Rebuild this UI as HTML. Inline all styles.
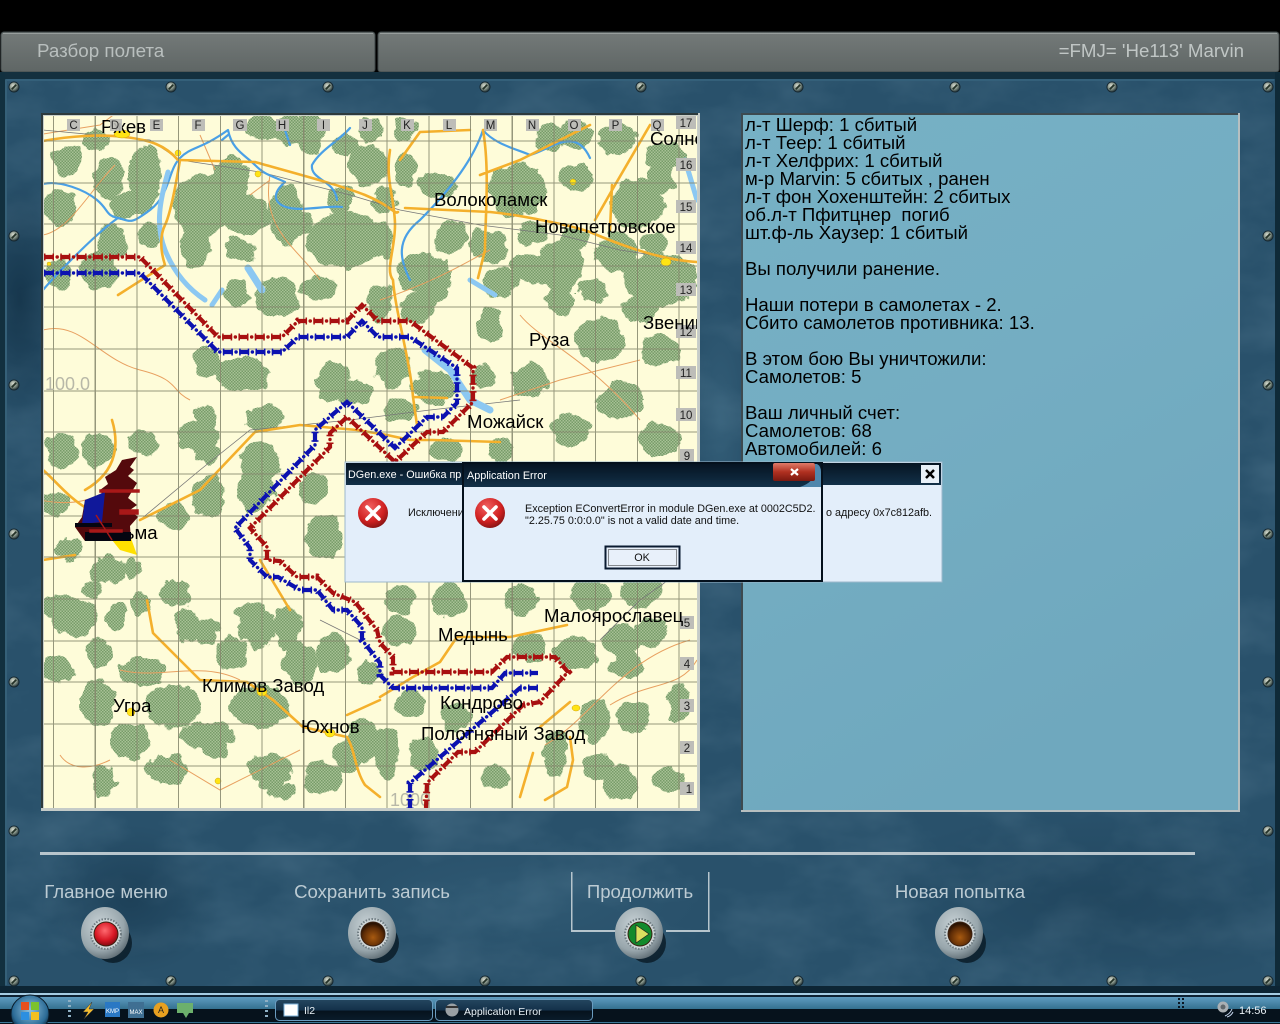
<!DOCTYPE html>
<html lang="ru"><head><meta charset="utf-8"><title>Разбор полета</title>
<style>
html,body{margin:0;padding:0;background:#000;width:1280px;height:1024px;overflow:hidden}
svg{display:block;position:absolute;left:0;top:0}
text{font-family:"Liberation Sans",Arial,sans-serif}
</style></head><body>
<svg xmlns="http://www.w3.org/2000/svg" width="1280" height="1024" viewBox="0 0 1280 1024">
<defs>
<linearGradient id="bar" x1="0" y1="0" x2="0" y2="1"><stop offset="0" stop-color="#747a79"/><stop offset="1" stop-color="#5f6665"/></linearGradient>
<linearGradient id="panel" x1="0" y1="0" x2="0.4" y2="1"><stop offset="0" stop-color="#76b1c5"/><stop offset=".5" stop-color="#74adc2"/><stop offset="1" stop-color="#6fa8be"/></linearGradient>
<radialGradient id="sw1" cx=".5" cy=".5" r=".5"><stop offset="0" stop-color="#0f2d42" stop-opacity=".75"/><stop offset="1" stop-color="#0f2d42" stop-opacity="0"/></radialGradient>
<radialGradient id="sw2" cx=".5" cy=".5" r=".5"><stop offset="0" stop-color="#4f7f98" stop-opacity=".45"/><stop offset="1" stop-color="#4f7f98" stop-opacity="0"/></radialGradient>
<linearGradient id="tb" x1="0" y1="0" x2="0" y2="1"><stop offset="0" stop-color="#5f9cc0"/><stop offset="1" stop-color="#34708f"/></linearGradient>
<linearGradient id="tbb" x1="0" y1="0" x2="0" y2="1"><stop offset="0" stop-color="#24465f"/><stop offset=".5" stop-color="#14314a"/><stop offset=".55" stop-color="#06121d"/><stop offset="1" stop-color="#0a1c2b"/></linearGradient>
<linearGradient id="ttl" x1="0" y1="0" x2="0" y2="1"><stop offset="0" stop-color="#061422"/><stop offset="1" stop-color="#123048"/></linearGradient>
<linearGradient id="cls" x1="0" y1="0" x2="0" y2="1"><stop offset="0" stop-color="#e07a68"/><stop offset=".5" stop-color="#b03020"/><stop offset="1" stop-color="#7a1810"/></linearGradient>
<radialGradient id="err" cx=".4" cy=".3" r=".8"><stop offset="0" stop-color="#f06060"/><stop offset=".6" stop-color="#d02020"/><stop offset="1" stop-color="#701010"/></radialGradient>
<radialGradient id="screw" cx=".4" cy=".35" r=".7"><stop offset="0" stop-color="#d8dcd0"/><stop offset=".6" stop-color="#7c8a80"/><stop offset="1" stop-color="#1c2c30"/></radialGradient>
<radialGradient id="metal" cx=".4" cy=".35" r=".75"><stop offset="0" stop-color="#c8d2d6"/><stop offset=".65" stop-color="#98a6ac"/><stop offset="1" stop-color="#4c5a62"/></radialGradient>
<radialGradient id="redb" cx=".45" cy=".35" r=".7"><stop offset="0" stop-color="#ff6a70"/><stop offset=".6" stop-color="#d81825"/><stop offset="1" stop-color="#7a0810"/></radialGradient>
<radialGradient id="brb" cx=".5" cy=".65" r=".6"><stop offset="0" stop-color="#a85a10"/><stop offset=".7" stop-color="#5e2c06"/><stop offset="1" stop-color="#2a1202"/></radialGradient>
<radialGradient id="orb" cx=".5" cy=".4" r=".6"><stop offset="0" stop-color="#8fc0dc"/><stop offset=".75" stop-color="#2b6b96"/><stop offset="1" stop-color="#0a2436"/></radialGradient>
<pattern id="fo" width="3" height="3" patternUnits="userSpaceOnUse"><rect width="3" height="3" fill="#a8c196"/><rect width="1.500" height="1.500" fill="#769c68"/><rect x="1.500" y="1.500" width="1.500" height="1.500" fill="#769c68"/></pattern>
<filter id="rough" filterUnits="userSpaceOnUse" x="30" y="100" width="680" height="720"><feTurbulence type="fractalNoise" baseFrequency=".07" numOctaves="3" seed="4"/><feDisplacementMap in="SourceGraphic" scale="13" xChannelSelector="R" yChannelSelector="G"/></filter>
<filter id="mott" filterUnits="userSpaceOnUse" x="0" y="72" width="1280" height="920"><feTurbulence type="fractalNoise" baseFrequency=".012 .02" numOctaves="4" seed="8"/><feColorMatrix values="0 0 0 0 .4  0 0 0 0 .6  0 0 0 0 .72  1.600 0 0 0 -.62"/></filter>
<clipPath id="mapc"><rect x="44" y="116" width="653" height="692"/></clipPath>
<clipPath id="tbc"><rect x="0" y="993" width="1280" height="31"/></clipPath>
<mask id="fm" maskUnits="userSpaceOnUse" x="30" y="100" width="680" height="720">
<g fill="#fff" stroke="#fff" stroke-width="9" filter="url(#rough)">
<ellipse cx="95" cy="140" rx="10" ry="6"/><ellipse cx="68" cy="160" rx="10" ry="10"/><ellipse cx="108" cy="178" rx="10" ry="16"/><ellipse cx="145" cy="175" rx="12" ry="25"/><ellipse cx="130" cy="205" rx="18" ry="8"/><ellipse cx="60" cy="208" rx="12" ry="14"/><ellipse cx="112" cy="240" rx="10" ry="14"/><ellipse cx="150" cy="235" rx="8" ry="8"/><ellipse cx="200" cy="205" rx="22" ry="28"/><ellipse cx="230" cy="190" rx="15" ry="30"/><ellipse cx="245" cy="215" rx="20" ry="15"/><ellipse cx="195" cy="245" rx="10" ry="18"/><ellipse cx="240" cy="250" rx="12" ry="8"/><ellipse cx="285" cy="215" rx="12" ry="25"/><ellipse cx="300" cy="225" rx="8" ry="8"/><ellipse cx="345" cy="240" rx="32" ry="24"/><ellipse cx="290" cy="130" rx="15" ry="10"/><ellipse cx="262" cy="128" rx="12" ry="7"/><ellipse cx="310" cy="132" rx="10" ry="18"/><ellipse cx="345" cy="145" rx="10" ry="6"/><ellipse cx="368" cy="165" rx="15" ry="16"/><ellipse cx="372" cy="130" rx="8" ry="8"/><ellipse cx="385" cy="200" rx="8" ry="8"/><ellipse cx="380" cy="240" rx="10" ry="15"/><ellipse cx="340" cy="200" rx="8" ry="10"/><ellipse cx="100" cy="270" rx="14" ry="15"/><ellipse cx="60" cy="275" rx="8" ry="10"/>
<ellipse cx="405" cy="130" rx="8" ry="8"/><ellipse cx="438" cy="185" rx="15" ry="8"/><ellipse cx="517" cy="190" rx="25" ry="22"/><ellipse cx="550" cy="137" rx="10" ry="10"/><ellipse cx="575" cy="135" rx="12" ry="10"/><ellipse cx="617" cy="138" rx="14" ry="12"/><ellipse cx="577" cy="178" rx="12" ry="10"/><ellipse cx="637" cy="203" rx="22" ry="20"/><ellipse cx="667" cy="157" rx="16" ry="10"/><ellipse cx="660" cy="180" rx="10" ry="10"/><ellipse cx="450" cy="238" rx="12" ry="12"/><ellipse cx="493" cy="247" rx="10" ry="13"/><ellipse cx="478" cy="243" rx="5" ry="10"/><ellipse cx="532" cy="233" rx="10" ry="8"/><ellipse cx="573" cy="240" rx="10" ry="7"/><ellipse cx="617" cy="253" rx="16" ry="16"/><ellipse cx="560" cy="267" rx="18" ry="22"/><ellipse cx="530" cy="267" rx="17" ry="10"/><ellipse cx="500" cy="283" rx="13" ry="10"/><ellipse cx="423" cy="273" rx="23" ry="15"/><ellipse cx="440" cy="277" rx="7" ry="13"/><ellipse cx="660" cy="280" rx="33" ry="22"/><ellipse cx="405" cy="170" rx="7" ry="13"/><ellipse cx="593" cy="290" rx="10" ry="8"/><ellipse cx="653" cy="243" rx="10" ry="8"/>
<ellipse cx="207" cy="363" rx="10" ry="10"/><ellipse cx="243" cy="375" rx="23" ry="13"/><ellipse cx="237" cy="293" rx="8" ry="10"/><ellipse cx="277" cy="298" rx="17" ry="15"/><ellipse cx="317" cy="288" rx="13" ry="8"/><ellipse cx="380" cy="302" rx="10" ry="13"/><ellipse cx="417" cy="307" rx="12" ry="10"/><ellipse cx="433" cy="290" rx="10" ry="10"/><ellipse cx="333" cy="383" rx="13" ry="17"/><ellipse cx="392" cy="368" rx="13" ry="15"/><ellipse cx="357" cy="392" rx="10" ry="8"/><ellipse cx="433" cy="387" rx="17" ry="13"/><ellipse cx="490" cy="323" rx="8" ry="13"/><ellipse cx="483" cy="377" rx="7" ry="7"/><ellipse cx="265" cy="418" rx="15" ry="8"/><ellipse cx="205" cy="420" rx="7" ry="12"/><ellipse cx="263" cy="460" rx="13" ry="8"/><ellipse cx="400" cy="410" rx="12" ry="8"/><ellipse cx="447" cy="450" rx="13" ry="7"/><ellipse cx="207" cy="453" rx="5" ry="7"/>
<ellipse cx="62" cy="450" rx="12" ry="12"/><ellipse cx="97" cy="450" rx="12" ry="13"/><ellipse cx="143" cy="443" rx="10" ry="8"/><ellipse cx="197" cy="437" rx="17" ry="10"/><ellipse cx="207" cy="453" rx="8" ry="7"/><ellipse cx="210" cy="497" rx="12" ry="18"/><ellipse cx="260" cy="463" rx="15" ry="17"/><ellipse cx="255" cy="490" rx="13" ry="17"/><ellipse cx="323" cy="537" rx="15" ry="17"/><ellipse cx="313" cy="490" rx="10" ry="12"/><ellipse cx="173" cy="517" rx="12" ry="8"/><ellipse cx="107" cy="570" rx="13" ry="10"/><ellipse cx="70" cy="550" rx="10" ry="5"/><ellipse cx="93" cy="590" rx="5" ry="5"/><ellipse cx="177" cy="593" rx="10" ry="10"/><ellipse cx="65" cy="608" rx="17" ry="10"/><ellipse cx="133" cy="568" rx="5" ry="5"/><ellipse cx="55" cy="503" rx="10" ry="8"/><ellipse cx="247" cy="612" rx="7" ry="5"/><ellipse cx="140" cy="603" rx="6" ry="6"/>
<ellipse cx="73" cy="617" rx="18" ry="15"/><ellipse cx="117" cy="618" rx="5" ry="10"/><ellipse cx="187" cy="625" rx="8" ry="12"/><ellipse cx="207" cy="633" rx="7" ry="10"/><ellipse cx="257" cy="627" rx="13" ry="17"/><ellipse cx="287" cy="627" rx="10" ry="17"/><ellipse cx="232" cy="653" rx="10" ry="12"/><ellipse cx="100" cy="653" rx="8" ry="10"/><ellipse cx="143" cy="672" rx="17" ry="10"/><ellipse cx="97" cy="703" rx="13" ry="17"/><ellipse cx="173" cy="707" rx="23" ry="18"/><ellipse cx="260" cy="707" rx="25" ry="17"/><ellipse cx="300" cy="663" rx="12" ry="17"/><ellipse cx="333" cy="653" rx="13" ry="15"/><ellipse cx="57" cy="670" rx="13" ry="10"/><ellipse cx="130" cy="740" rx="17" ry="13"/><ellipse cx="207" cy="735" rx="23" ry="7"/><ellipse cx="167" cy="770" rx="17" ry="10"/><ellipse cx="270" cy="770" rx="18" ry="12"/><ellipse cx="323" cy="778" rx="15" ry="12"/><ellipse cx="103" cy="782" rx="8" ry="12"/><ellipse cx="362" cy="740" rx="13" ry="17"/><ellipse cx="347" cy="757" rx="8" ry="12"/><ellipse cx="370" cy="672" rx="8" ry="8"/><ellipse cx="217" cy="750" rx="7" ry="5"/><ellipse cx="280" cy="792" rx="10" ry="4"/>
<ellipse cx="400" cy="630" rx="13" ry="10"/><ellipse cx="530" cy="648" rx="13" ry="10"/><ellipse cx="577" cy="653" rx="17" ry="12"/><ellipse cx="623" cy="640" rx="17" ry="12"/><ellipse cx="650" cy="633" rx="13" ry="10"/><ellipse cx="627" cy="667" rx="13" ry="8"/><ellipse cx="410" cy="703" rx="10" ry="10"/><ellipse cx="457" cy="717" rx="12" ry="10"/><ellipse cx="387" cy="753" rx="7" ry="20"/><ellipse cx="423" cy="753" rx="10" ry="13"/><ellipse cx="555" cy="753" rx="8" ry="17"/><ellipse cx="595" cy="720" rx="10" ry="17"/><ellipse cx="633" cy="717" rx="13" ry="10"/><ellipse cx="597" cy="767" rx="10" ry="10"/><ellipse cx="620" cy="783" rx="12" ry="13"/><ellipse cx="670" cy="780" rx="12" ry="8"/><ellipse cx="680" cy="703" rx="8" ry="13"/><ellipse cx="495" cy="777" rx="10" ry="8"/>
<ellipse cx="600" cy="340" rx="20" ry="18"/><ellipse cx="660" cy="350" rx="15" ry="12"/><ellipse cx="560" cy="300" rx="12" ry="10"/><ellipse cx="530" cy="380" rx="14" ry="12"/><ellipse cx="620" cy="400" rx="18" ry="15"/><ellipse cx="570" cy="430" rx="15" ry="12"/><ellipse cx="660" cy="440" rx="15" ry="12"/><ellipse cx="500" cy="450" rx="8" ry="7"/><ellipse cx="640" cy="310" rx="12" ry="10"/><ellipse cx="590" cy="595" rx="15" ry="10"/><ellipse cx="640" cy="590" rx="15" ry="12"/><ellipse cx="520" cy="600" rx="15" ry="10"/><ellipse cx="450" cy="600" rx="14" ry="12"/><ellipse cx="400" cy="600" rx="10" ry="10"/>
</g></mask>
<g id="s"><circle r="5.500" fill="#142630"/><circle r="4.600" fill="url(#screw)"/><path d="M-2.200 2.200 2.200-2.200" stroke="#243228" stroke-width="1.800"/></g>
<g id="btn"><ellipse cx="7" cy="9" rx="19" ry="20" fill="#0a1c28" opacity=".85"/><ellipse cx="-1" cy="-1" rx="24" ry="26" fill="url(#metal)"/><circle cx="0" cy="0" r="15" fill="#cfd6d8" stroke="#6f7c82" stroke-dasharray="1.500 1.500" stroke-width="2"/><circle r="12.500" fill="#3a2010"/></g>
</defs>

<!-- top black -->
<rect width="1280" height="1024" fill="#000"/>
<!-- header -->
<rect x="1" y="32" width="374" height="40" rx="3" fill="url(#bar)" stroke="#40494a"/>
<rect x="378" y="32" width="901" height="40" rx="3" fill="url(#bar)" stroke="#40494a"/>
<rect x="3" y="33" width="370" height="1" fill="#989e9d"/><rect x="380" y="33" width="897" height="1" fill="#989e9d"/>
<text x="37" y="57" font-size="18.800" fill="#b9bfbe">Разбор полета</text>
<text x="1244" y="57" font-size="18.700" fill="#c0c6c5" text-anchor="end">=FMJ= 'He113' Marvin</text>

<!-- body panel -->
<rect x="0" y="72" width="1280" height="921" fill="#29516b"/>
<rect x="0" y="72" width="1280" height="921" filter="url(#mott)" opacity=".16"/>
<ellipse cx="130" cy="900" rx="90" ry="75" fill="url(#sw1)" opacity=".6"/>
<ellipse cx="20" cy="300" rx="55" ry="130" fill="url(#sw1)"/>
<ellipse cx="720" cy="420" rx="30" ry="120" fill="url(#sw2)" opacity=".6"/>
<ellipse cx="1100" cy="900" rx="240" ry="90" fill="url(#sw1)" opacity=".4"/>
<ellipse cx="520" cy="900" rx="180" ry="60" fill="url(#sw2)" opacity=".4"/>
<rect x="0" y="72" width="1280" height="7" fill="#14303f"/>
<rect x="6" y="79" width="1268" height="2" fill="#34607a"/>
<rect x="0" y="72" width="5" height="921" fill="#12303f"/>
<rect x="5" y="80" width="2" height="905" fill="#356078"/>
<rect x="1275" y="72" width="5" height="921" fill="#0f2a38"/>
<rect x="0" y="986" width="1280" height="7" fill="#0d2534"/>

<!-- map -->
<rect x="41" y="113" width="659" height="698" fill="#c9cfc9"/>
<rect x="41" y="113" width="657" height="2" fill="#2d3a3c"/><rect x="41" y="113" width="2" height="696" fill="#2d3a3c"/>
<g clip-path="url(#mapc)">
<rect x="43" y="115" width="655" height="694" fill="#fefcd9"/>
<rect x="30" y="100" width="680" height="720" fill="url(#fo)" mask="url(#fm)"/>
<!-- thin roads -->
<g fill="none" stroke="#e8a060" stroke-width="1">
<path d="M43 134 100 125 120 110M43 235C70 230 90 190 115 165M43 330C80 320 100 360 140 370S170 390 190 400M215 170 200 135M250 195 270 180M270 175C260 230 300 250 320 280M40 500C90 510 110 490 130 470M380 300C440 280 470 260 490 250M520 315C540 340 590 360 640 420M120 670C160 680 200 660 240 680M170 760 220 790 300 750M60 755C70 770 90 770 110 760M545 745C590 720 620 660 690 640M610 705C650 680 680 690 697 660M500 400 560 380 640 360"/>
</g>
<!-- rail -->
<g fill="none" stroke="#777" stroke-width=".8"><path d="M43 130 150 140 180 160 260 172 350 195 400 210 480 225 560 235 620 250 697 262M140 520 200 470 250 430 350 420 430 410 520 400M320 620 360 640M600 640 640 600 697 560"/></g>
<!-- rivers -->
<g fill="none" stroke="#4aa0e6" stroke-width="2.200" stroke-linejoin="round" stroke-linecap="round">
<path d="M43 184C60 180 85 190 97 200S105 215 118 218 130 225 150 210 168 170 180 158 200 150 228 130C232 150 245 155 255 165S270 175 285 182C270 195 275 205 290 208S330 205 342 207M43 290C60 270 100 230 118 218M228 135 222 140M285 130 290 145M312 165C320 150 340 140 350 128M312 165C310 180 335 180 337 200M410 280C400 260 395 240 420 220 430 210 470 170 483 130 495 145 520 150 530 155 550 150 575 125 590 158 610 160 613 165M530 155C540 190 560 225 573 222M500 200 475 210 490 225 520 245 545 243M400 260C420 250 430 260 433 265S470 300 480 285M553 265C570 260 600 280 610 285 640 260 650 270 660 290M660 180 680 175 697 165M40 440C60 420 75 430 75 470M70 420C80 430 85 460 60 480M170 420C180 430 175 460 145 470M240 420C225 440 250 480 270 540 300 570 290 590 320 610M320 420C310 450 330 500 340 500M43 545C80 550 110 540 130 550S190 530 230 550 250 600 260 620M110 580C120 590 130 610 120 640M285 600C290 620 280 640 330 650M43 620 65 640 90 650 100 670M200 620C190 640 220 650 232 700M300 660C270 670 290 690 320 710 340 730 350 760 355 790M43 680 60 720 43 730 120 725C100 750 85 770 90 795M80 675C110 690 140 680 170 685M157 762C180 745 200 740 240 742 250 760 245 780 262 795 290 780 300 790 300 770 300 750 310 740M360 720C390 740 400 760 420 790M430 780C450 770 470 750 490 720 540 730 590 680 610 665 640 650 650 660 652 668M610 720 640 745 660 750 697 750"/>
</g>
<g fill="none" stroke="#8cc8f2" stroke-linecap="round" stroke-linejoin="round">
<path stroke-width="5" d="M168 172C160 200 155 225 165 250S190 290 205 300M222 290 212 305M470 280 495 295M685 160 697 200"/>
<path stroke-width="7" d="M425 350 450 370 470 400 490 410M248 268 262 290"/>
</g>
<!-- roads -->
<g fill="none" stroke="#f4b02c" stroke-width="2.600" stroke-linecap="round" stroke-linejoin="round">
<path d="M43 141C70 136 100 134 125 137S165 145 178 160L255 162C290 172 340 185 365 195S395 215 398 212M180 160C175 190 170 215 165 225S160 250 165 265L118 295M390 150C385 180 395 200 395 225S385 270 393 280M400 160 420 132 470 130M405 208 490 212C520 215 570 225 590 232 620 245 660 260 697 262M483 130C490 170 485 220 485 250L478 278M480 175 520 160 590 125M595 220 615 185 650 125M612 185 610 230M112 420C118 440 120 470 85 490M43 470C55 480 70 500 90 510M140 520 200 490 255 432 300 425 357 430 387 435 410 440 433 440 500 442M413 397 447 398M413 397C410 360 395 310 393 280M413 397 417 425M147 600 153 633 180 660 200 680 247 682 273 700 303 727 347 737C355 750 355 770 365 785L380 797M347 715 380 700M380 697 413 677 440 662 457 637 510 637 567 625M533 753 520 797M570 737 573 760 567 787 545 800M540 727 570 702M260 560 290 610M43 560 75 555"/>
</g>
<g fill="#ffe414" stroke="#d0a010" stroke-width=".5"><ellipse cx="122" cy="134" rx="8" ry="4"/><circle cx="178" cy="153" r="3"/><circle cx="258" cy="174" r="3"/><circle cx="573" cy="182" r="3"/><ellipse cx="666" cy="262" rx="5" ry="4"/><ellipse cx="131" cy="712" rx="4" ry="4"/><ellipse cx="262" cy="692" rx="5" ry="4"/><ellipse cx="330" cy="733" rx="5" ry="4"/><ellipse cx="576" cy="708" rx="4" ry="3"/><circle cx="49" cy="264" r="2"/><circle cx="218" cy="781" r="3"/></g>
<!-- grid -->
<g stroke="#85866c" stroke-width="1.100" opacity=".85" shape-rendering="crispEdges">
<path d="M53.500 115V809M95.200 115V809M137 115V809M178.600 115V809M220.300 115V809M262 115V809M303.700 115V809M345.400 115V809M387 115V809M428.800 115V809M470.500 115V809M512.200 115V809M553.900 115V809M595.600 115V809M637.300 115V809M679 115V809"/>
<path d="M43 141H698M43 183H698M43 224H698M43 266H698M43 307H698M43 349H698M43 391H698M43 432H698M43 474H698M43 516H698M43 557H698M43 599H698M43 641H698M43 682H698M43 724H698M43 766H698"/>
</g>
<!-- grid labels -->
<g fill="#bdbdb8"><rect x="67" y="119" width="13" height="12"/><rect x="150" y="119" width="13" height="12"/><rect x="192" y="119" width="13" height="12"/><rect x="233" y="119" width="14" height="12"/><rect x="276" y="119" width="13" height="12"/><rect x="317" y="119" width="13" height="12"/><rect x="359" y="119" width="13" height="12"/><rect x="401" y="119" width="13" height="12"/><rect x="443" y="119" width="13" height="12"/><rect x="484" y="119" width="13" height="12"/><rect x="526" y="119" width="13" height="12"/><rect x="568" y="119" width="13" height="12"/><rect x="609" y="119" width="13" height="12"/><rect x="651" y="119" width="13" height="12"/>
<rect x="676" y="116" width="20" height="13"/><rect x="676" y="158" width="20" height="13"/><rect x="676" y="200" width="20" height="13"/><rect x="676" y="241" width="20" height="13"/><rect x="676" y="283" width="20" height="13"/><rect x="676" y="325" width="20" height="13"/><rect x="676" y="366" width="20" height="13"/><rect x="676" y="408" width="20" height="13"/><rect x="680" y="449" width="14" height="13"/><rect x="680" y="616" width="14" height="13"/><rect x="680" y="657" width="14" height="13"/><rect x="680" y="699" width="14" height="13"/><rect x="680" y="741" width="14" height="13"/><rect x="680" y="782" width="14" height="13"/></g>
<g font-size="11.500" fill="#222" text-anchor="middle"><text x="73.500" y="129">C</text><text x="156.500" y="129">E</text><text x="198" y="129">F</text><text x="240" y="129">G</text><text x="282" y="129">H</text><text x="323.500" y="129">I</text><text x="365" y="129">J</text><text x="407" y="129">K</text><text x="449" y="129">L</text><text x="490.500" y="129">M</text><text x="532" y="129">N</text><text x="574" y="129">O</text><text x="615.500" y="129">P</text><text x="657" y="129">Q</text>
<text x="686" y="127">17</text><text x="686" y="169">16</text><text x="686" y="211">15</text><text x="686" y="252">14</text><text x="686" y="294">13</text><text x="686" y="336">12</text><text x="686" y="377">11</text><text x="686" y="419">10</text><text x="687" y="460">9</text><text x="687" y="627">5</text><text x="687" y="668">4</text><text x="687" y="710">3</text><text x="687" y="752">2</text><text x="689" y="793">1</text></g>
<text x="45" y="390" font-size="18" fill="#b8b8a8">100.0</text>
<text x="390" y="806" font-size="18" fill="#b8b8a8">1000</text>
<!-- routes -->
<g fill="none" stroke-linejoin="miter">
<g stroke="#a81010">
<path stroke-width="4.200" stroke-dasharray="10 6.300" d="M44 257H140L218 337H282L298 321H347L362 305 378 321H410L473 368V402L443 432H427L395 462 347 417 330 433V447L250 528 267 547V560L280 561 297 577H317L333 593 355 602 377 630 380 643 393 657V672H492L507 657H555L568 672 540 702 523 705 475 752H458L427 783 426 808"/>
<path stroke-width="7" stroke-dasharray="1.500 7 1.500 6.300" d="M44 257H140L218 337H282L298 321H347L362 305 378 321H410L473 368V402L443 432H427L395 462 347 417 330 433V447L250 528 267 547V560L280 561 297 577H317L333 593 355 602 377 630 380 643 393 657V672H492L507 657H555L568 672 540 702 523 705 475 752H458L427 783 426 808"/>
<path stroke-width="3.400" stroke-linecap="round" stroke-dasharray=".1 16.200" stroke-dashoffset="-13.150" d="M44 257H140L218 337H282L298 321H347L362 305 378 321H410L473 368V402L443 432H427L395 462 347 417 330 433V447L250 528 267 547V560L280 561 297 577H317L333 593 355 602 377 630 380 643 393 657V672H492L507 657H555L568 672 540 702 523 705 475 752H458L427 783 426 808"/>
</g>
<g stroke="#0c12b0">
<path stroke-width="4.200" stroke-dasharray="10 6.300" d="M44 273H140L218 352H282L298 337H347L362 321 378 337H410L457 368V403L443 417H427L395 448 347 402 315 430V445L235 528 250 548V560L267 577H278L300 590H317L333 610H347L362 627V640L380 663 380 675 393 688H492L505 673H538M538 688H520L410 783V808"/>
<path stroke-width="7" stroke-dasharray="1.500 7 1.500 6.300" d="M44 273H140L218 352H282L298 337H347L362 321 378 337H410L457 368V403L443 417H427L395 448 347 402 315 430V445L235 528 250 548V560L267 577H278L300 590H317L333 610H347L362 627V640L380 663 380 675 393 688H492L505 673H538M538 688H520L410 783V808"/>
<path stroke-width="3.400" stroke-linecap="round" stroke-dasharray=".1 16.200" stroke-dashoffset="-13.150" d="M44 273H140L218 352H282L298 337H347L362 321 378 337H410L457 368V403L443 417H427L395 448 347 402 315 430V445L235 528 250 548V560L267 577H278L300 590H317L333 610H347L362 627V640L380 663 380 675 393 688H492L505 673H538M538 688H520L410 783V808"/>
</g>
</g>
<!-- city labels -->
<g font-size="18.600" fill="#000">
<text x="101" y="133">Ржев</text><text x="650" y="145">Солнечногорск</text><text x="434" y="206">Волоколамск</text><text x="535" y="233">Новопетровское</text><text x="643" y="329">Звенигород</text><text x="529" y="346">Руза</text><text x="467" y="428">Можайск</text><text x="94" y="539">Вязьма</text><text x="544" y="622">Малоярославец</text><text x="438" y="641">Медынь</text><text x="202" y="692">Климов Завод</text><text x="440" y="709">Кондрово</text><text x="113" y="712">Угра</text><text x="301" y="733">Юхнов</text><text x="421" y="740">Полотняный Завод</text>
</g>
<rect x="110" y="119" width="12" height="12" fill="#bdbdb8" opacity=".9"/><text x="115" y="129" font-size="11.500" fill="#333" text-anchor="middle">D</text>
<!-- burnt plane cluster -->
<path d="M112 540 127 527 137 555 120 550Z" fill="#ffe000"/>
<path d="M137 457 122 460 116 470 105 477 108 484 100 490 103 496 85 500 82 517 75 527 85 541 131 541 130 526 138 517 130 510 137 505 128 498 137 483 128 476 134 470 130 467Z" fill="#54090c"/>
<path d="M85 500 105 492 102 522 82 524Z" fill="#10189a"/>
<path d="M75 523H112V527H75ZM85 532H131V541H85Z" fill="#050510"/>
<path d="M100 490H139V492H100ZM120 510H138V514H120ZM90 530H122V532H90ZM96 515 112 540" stroke="#a81818" stroke-width="1.500" fill="#a81818"/>
</g>
<rect x="41" y="808" width="659" height="3" fill="#c5cbc8"/><rect x="698" y="113" width="2" height="698" fill="#c5cbc8"/>

<!-- text panel -->
<rect x="741" y="113" width="499" height="699" fill="#b7bfc0"/>
<rect x="741" y="113" width="497" height="2" fill="#3d4a50"/><rect x="741" y="113" width="2" height="697" fill="#3d4a50"/>
<rect x="743" y="115" width="495" height="695" fill="url(#panel)"/>
<g font-size="18.600" fill="#000">
<text x="745" y="131">л-т Шерф: 1 сбитый</text><text x="745" y="149">л-т Теер: 1 сбитый</text><text x="745" y="167">л-т Хелфрих: 1 сбитый</text><text x="745" y="185">м-р Marvin: 5 сбитых , ранен</text><text x="745" y="203">л-т фон Хохенштейн: 2 сбитых</text><text x="745" y="221" xml:space="preserve">об.л-т Пфитцнер  погиб</text><text x="745" y="239">шт.ф-ль Хаузер: 1 сбитый</text><text x="745" y="275">Вы получили ранение.</text><text x="745" y="311">Наши потери в самолетах - 2.</text><text x="745" y="329">Сбито самолетов противника: 13.</text><text x="745" y="365">В этом бою Вы уничтожили:</text><text x="745" y="383">Самолетов: 5</text><text x="745" y="419">Ваш личный счет:</text><text x="745" y="437">Самолетов: 68</text><text x="745" y="455">Автомобилей: 6</text>
</g>

<!-- screws -->
<g id="screws">
<use href="#s" x="14" y="87"/><use href="#s" x="171" y="87"/><use href="#s" x="328" y="87"/><use href="#s" x="485" y="87"/><use href="#s" x="641" y="87"/><use href="#s" x="798" y="87"/><use href="#s" x="955" y="87"/><use href="#s" x="1112" y="87"/><use href="#s" x="1268" y="87"/>
<use href="#s" x="14" y="981"/><use href="#s" x="171" y="981"/><use href="#s" x="328" y="981"/><use href="#s" x="485" y="981"/><use href="#s" x="641" y="981"/><use href="#s" x="798" y="981"/><use href="#s" x="955" y="981"/><use href="#s" x="1112" y="981"/><use href="#s" x="1268" y="981"/>
<use href="#s" x="14" y="236"/><use href="#s" x="14" y="385"/><use href="#s" x="14" y="534"/><use href="#s" x="14" y="682"/><use href="#s" x="14" y="831"/>
<use href="#s" x="1268" y="236"/><use href="#s" x="1268" y="385"/><use href="#s" x="1268" y="534"/><use href="#s" x="1268" y="682"/><use href="#s" x="1268" y="831"/>
</g>

<!-- bottom controls -->
<rect x="40" y="852" width="1155" height="3" fill="#b9c6cd"/>
<g fill="#b6c5cd"><rect x="571" y="872" width="1.500" height="59"/><rect x="571" y="930" width="45" height="2"/><rect x="708" y="872" width="1.500" height="59"/><rect x="666" y="930" width="44" height="2"/></g>
<g font-size="18.600" fill="#bccbd3" text-anchor="middle"><text x="106" y="898">Главное меню</text><text x="372" y="898">Сохранить запись</text><text x="640" y="898">Продолжить</text><text x="960" y="898">Новая попытка</text></g>
<use href="#btn" x="106" y="934"/><circle cx="106" cy="934" r="11.500" fill="url(#redb)"/>
<use href="#btn" x="373" y="934"/><circle cx="373" cy="934" r="11.500" fill="url(#brb)"/>
<use href="#btn" x="640" y="934"/><circle cx="640" cy="934" r="11.500" fill="#128a2c"/><path d="M636 925 649 934 636 943Z" fill="#d8e060" stroke="#202020" stroke-width=".7"/>
<use href="#btn" x="960" y="934"/><circle cx="960" cy="934" r="11.500" fill="url(#brb)"/>

<!-- back dialog -->
<rect x="345" y="462" width="597" height="120" fill="#e3eefa" stroke="#9cb8cc"/>
<rect x="346" y="463" width="595" height="22" fill="url(#ttl)"/>
<text x="348" y="478" font-size="10.800" fill="#fff">DGen.exe - Ошибка приложения</text>
<rect x="921" y="465" width="18" height="18" fill="#e8f0f8"/><path d="M926 470 934 478M934 470 926 478" stroke="#000" stroke-width="2.500"/>
<circle cx="373" cy="513" r="15" fill="url(#err)"/><path d="M367 507 379 519M379 507 367 519" stroke="#fff" stroke-width="3.600" stroke-linecap="round"/>
<text x="408" y="516" font-size="10.800" fill="#111">Исключение</text>
<text x="932" y="516" font-size="10.800" fill="#111" text-anchor="end">о адресу 0x7c812afb.</text>

<!-- front dialog -->
<rect x="462" y="462" width="361" height="120" fill="#04101c"/>
<rect x="464" y="487" width="357" height="93" fill="#e3eefa"/>
<rect x="464" y="464" width="357" height="23" fill="url(#ttl)"/>
<path d="M815 464H817Q821 466 821 472V487H800Q815 482 815 470Z" fill="#4f86ac"/>
<text x="467" y="479" font-size="10.800" fill="#fff">Application Error</text>
<rect x="773" y="463" width="42" height="18" rx="2" fill="url(#cls)"/><path d="M791 469 798 475M798 469 791 475" stroke="#fff" stroke-width="2.200"/>
<circle cx="490" cy="513" r="15" fill="url(#err)"/><path d="M484 507 496 519M496 507 484 519" stroke="#fff" stroke-width="3.600" stroke-linecap="round"/>
<text x="525" y="512" font-size="10.800" fill="#111">Exception EConvertError in module DGen.exe at 0002C5D2.</text>
<text x="525" y="524" font-size="10.800" fill="#111">"2.25.75 0:0:0.0" is not a valid date and time.</text>
<rect x="605.500" y="546.500" width="74" height="22" fill="#e8f0fa" stroke="#0a1a30" stroke-width="2"/>
<rect x="608.500" y="549.500" width="68" height="16" fill="none" stroke="#222" stroke-dasharray="1 1"/>
<text x="642" y="561" font-size="10.800" fill="#111" text-anchor="middle">OK</text>

<!-- taskbar -->
<g clip-path="url(#tbc)">
<rect x="0" y="993" width="1280" height="31" fill="#06121c"/>
<rect x="0" y="993" width="1280" height="2" fill="#a6cde4"/>
<rect x="0" y="995" width="1280" height="2" fill="#0e2233"/>
<rect x="0" y="997" width="1280" height="12" fill="url(#tb)"/>
<rect x="0" y="1022" width="1280" height="1" fill="#3c7898"/>
<circle cx="30" cy="1014" r="19" fill="url(#orb)" stroke="#0a1c2a"/>
<g><rect x="21" y="1002" width="8" height="8" fill="#e8501c"/><rect x="31" y="1002" width="8" height="8" fill="#7cc22c"/><rect x="21" y="1012" width="8" height="8" fill="#2c8fe0"/><rect x="31" y="1012" width="8" height="8" fill="#f4c020"/></g>
<g fill="#8fb0c4"><rect x="68" y="1000" width="3" height="2"/><rect x="68" y="1005" width="3" height="2"/><rect x="68" y="1010" width="3" height="2"/><rect x="68" y="1015" width="3" height="2"/><rect x="265" y="1000" width="3" height="2"/><rect x="265" y="1005" width="3" height="2"/><rect x="265" y="1010" width="3" height="2"/><rect x="265" y="1015" width="3" height="2"/></g>
<path d="M92 1002 83 1012 88 1012 84 1019 94 1009 89 1009Z" fill="#f2bc30" stroke="#333" stroke-width=".5"/>
<rect x="105" y="1002" width="15" height="15" fill="#2a78c4"/><text x="112.500" y="1013" font-size="6" fill="#fff" text-anchor="middle">KMP</text>
<rect x="128" y="1002" width="16" height="16" fill="#3f6f92"/><text x="136" y="1014" font-size="6" fill="#fff" text-anchor="middle">MAX</text>
<circle cx="161" cy="1010" r="7.500" fill="#e8a020"/><text x="161" y="1013" font-size="9" fill="#222" text-anchor="middle">A</text>
<path d="M177 1003H193V1013H189L186 1018 183 1013H177Z" fill="#6cb06c"/>
<rect x="275.500" y="999.500" width="157" height="21" rx="4" fill="url(#tbb)" stroke="#6a9cc0"/>
<rect x="284" y="1004" width="14" height="12" fill="#fff" stroke="#7ab0d8"/>
<text x="304" y="1014" font-size="10.500" fill="#e8f0f5">Il2</text>
<rect x="435.500" y="999.500" width="157" height="21" rx="4" fill="url(#tbb)" stroke="#6a9cc0"/>
<circle cx="452" cy="1010" r="6.500" fill="#9aa0a4"/><path d="M446 1006H458V1008H446Z" fill="#333"/>
<text x="464" y="1015" font-size="10.500" fill="#e8f0f5">Application Error</text>
<g fill="#0a1622"><rect x="1178" y="998" width="2" height="2"/><rect x="1182" y="998" width="2" height="2"/><rect x="1178" y="1002" width="2" height="2"/><rect x="1182" y="1002" width="2" height="2"/><rect x="1178" y="1006" width="2" height="2"/><rect x="1182" y="1006" width="2" height="2"/></g>
<circle cx="1223" cy="1007" r="5.500" fill="#aab0b4"/><circle cx="1223" cy="1007" r="2.500" fill="#60686c"/><path d="M1225 1016Q1230 1014 1232 1009M1227 1017Q1231 1016 1233 1012" stroke="#c8d8f0" fill="none"/>
<text x="1239" y="1014" font-size="11" fill="#e8f0f5">14:56</text>
</g>
</svg>
</body></html>
